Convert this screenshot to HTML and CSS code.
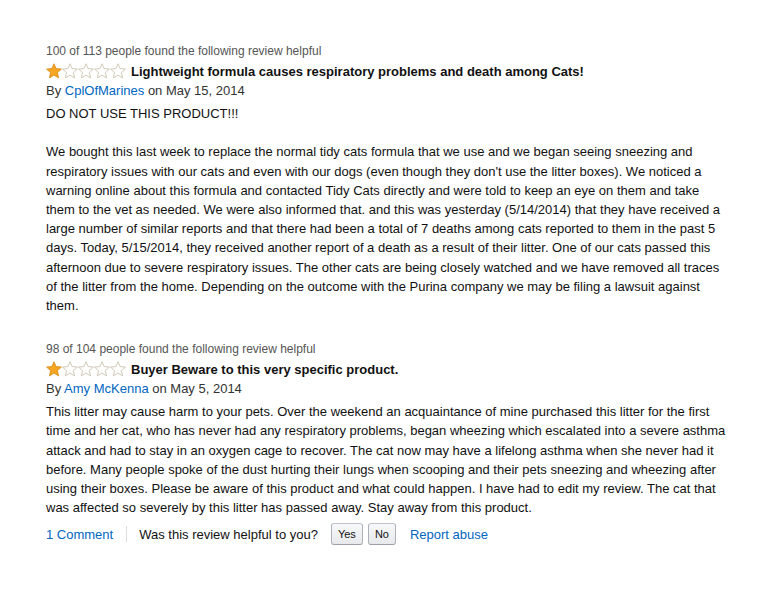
FILE: index.html
```html
<!DOCTYPE html>
<html>
<head>
<meta charset="utf-8">
<link rel="stylesheet" href="styles.css">
</head>
<body>
<div class="reviews">
  <div class="review">
    <div class="helpful">100 of 113 people found the following review helpful</div>
    <div class="title-row">
      <span class="stars">
        <svg class="star" viewBox="0 0 16 16"><path class="full" d="M8 0.8L10.1 5.6L15.4 6.1L11.4 9.6L12.6 14.9L8 12.1L3.4 14.9L4.6 9.6L0.6 6.1L5.9 5.6Z"/></svg><svg class="star" viewBox="0 0 16 16"><path class="empty" d="M8 0.8L10.1 5.6L15.4 6.1L11.4 9.6L12.6 14.9L8 12.1L3.4 14.9L4.6 9.6L0.6 6.1L5.9 5.6Z"/></svg><svg class="star" viewBox="0 0 16 16"><path class="empty" d="M8 0.8L10.1 5.6L15.4 6.1L11.4 9.6L12.6 14.9L8 12.1L3.4 14.9L4.6 9.6L0.6 6.1L5.9 5.6Z"/></svg><svg class="star" viewBox="0 0 16 16"><path class="empty" d="M8 0.8L10.1 5.6L15.4 6.1L11.4 9.6L12.6 14.9L8 12.1L3.4 14.9L4.6 9.6L0.6 6.1L5.9 5.6Z"/></svg><svg class="star" viewBox="0 0 16 16"><path class="empty" d="M8 0.8L10.1 5.6L15.4 6.1L11.4 9.6L12.6 14.9L8 12.1L3.4 14.9L4.6 9.6L0.6 6.1L5.9 5.6Z"/></svg>
      </span>
      <span class="title">Lightweight formula causes respiratory problems and death among Cats!</span>
    </div>
    <div class="byline">By <a class="link" href="#">CplOfMarines</a> on May 15, 2014</div>
    <div class="text">DO NOT USE THIS PRODUCT!!!<br><br>We bought this last week to replace the normal tidy cats formula that we use and we began seeing sneezing and<br>respiratory issues with our cats and even with our dogs (even though they don't use the litter boxes). We noticed a<br>warning online about this formula and contacted Tidy Cats directly and were told to keep an eye on them and take<br>them to the vet as needed. We were also informed that. and this was yesterday (5/14/2014) that they have received a<br>large number of similar reports and that there had been a total of 7 deaths among cats reported to them in the past 5<br>days. Today, 5/15/2014, they received another report of a death as a result of their litter. One of our cats passed this<br>afternoon due to severe respiratory issues. The other cats are being closely watched and we have removed all traces<br>of the litter from the home. Depending on the outcome with the Purina company we may be filing a lawsuit against<br>them.</div>
  </div>

  <div class="review second">
    <div class="helpful">98 of 104 people found the following review helpful</div>
    <div class="title-row">
      <span class="stars">
        <svg class="star" viewBox="0 0 16 16"><path class="full" d="M8 0.8L10.1 5.6L15.4 6.1L11.4 9.6L12.6 14.9L8 12.1L3.4 14.9L4.6 9.6L0.6 6.1L5.9 5.6Z"/></svg><svg class="star" viewBox="0 0 16 16"><path class="empty" d="M8 0.8L10.1 5.6L15.4 6.1L11.4 9.6L12.6 14.9L8 12.1L3.4 14.9L4.6 9.6L0.6 6.1L5.9 5.6Z"/></svg><svg class="star" viewBox="0 0 16 16"><path class="empty" d="M8 0.8L10.1 5.6L15.4 6.1L11.4 9.6L12.6 14.9L8 12.1L3.4 14.9L4.6 9.6L0.6 6.1L5.9 5.6Z"/></svg><svg class="star" viewBox="0 0 16 16"><path class="empty" d="M8 0.8L10.1 5.6L15.4 6.1L11.4 9.6L12.6 14.9L8 12.1L3.4 14.9L4.6 9.6L0.6 6.1L5.9 5.6Z"/></svg><svg class="star" viewBox="0 0 16 16"><path class="empty" d="M8 0.8L10.1 5.6L15.4 6.1L11.4 9.6L12.6 14.9L8 12.1L3.4 14.9L4.6 9.6L0.6 6.1L5.9 5.6Z"/></svg>
      </span>
      <span class="title">Buyer Beware to this very specific product.</span>
    </div>
    <div class="byline">By <a class="link" href="#">Amy McKenna</a> on May 5, 2014</div>
    <div class="text">This litter may cause harm to your pets. Over the weekend an acquaintance of mine purchased this litter for the first<br>time and her cat, who has never had any respiratory problems, began wheezing which escalated into a severe asthma<br>attack and had to stay in an oxygen cage to recover. The cat now may have a lifelong asthma when she never had it<br>before. Many people spoke of the dust hurting their lungs when scooping and their pets sneezing and wheezing after<br>using their boxes. Please be aware of this product and what could happen. I have had to edit my review. The cat that<br>was affected so severely by this litter has passed away. Stay away from this product.</div>
    <div class="actions">
      <a class="link comment" href="#">1 Comment</a>
      <span class="sep"></span>
      <span class="question">Was this review helpful to you?</span>
      <span class="btn">Yes</span>
      <span class="btn">No</span>
      <a class="link report" href="#">Report abuse</a>
    </div>
  </div>
</div>
</body>
</html>
```
FILE: styles.css
```css
html, body {
  margin: 0;
  padding: 0;
  background: #ffffff;
}
body {
  font-family: "Liberation Sans", Arial, Helvetica, sans-serif;
  color: #111111;
}
.reviews {
  padding: 42px 0 0 46px;
  width: 720px;
}
.review {
  display: flex;
  flex-direction: column;
}
.second {
  margin-top: 25px;
}
.helpful {
  font-size: 12px;
  line-height: 19px;
  color: #555555;
}
.title-row {
  display: flex;
  align-items: center;
  height: 20px;
}
.stars {
  display: flex;
  width: 80px;
  margin-right: 5px;
}
.star {
  width: 16px;
  height: 16px;
  display: block;
}
.full {
  fill: #f6a623;
  stroke: #d4870c;
  stroke-width: 0.8;
  stroke-linejoin: round;
}
.empty {
  fill: #ffffff;
  stroke: #c6bca6;
  stroke-width: 0.8;
  stroke-linejoin: round;
}
.title {
  font-size: 13px;
  font-weight: bold;
  color: #111111;
}
.byline {
  font-size: 13px;
  line-height: 19px;
  color: #333333;
  margin-bottom: 4px;
}
.link {
  color: #0066c0;
  text-decoration: none;
}
.text {
  font-size: 13px;
  line-height: 19.2px;
  color: #111111;
  white-space: nowrap;
}
.actions {
  display: flex;
  align-items: center;
  font-size: 13px;
  margin-top: 6px;
  height: 22px;
}
.sep {
  width: 1px;
  height: 16px;
  background: #dddddd;
  margin: 0 12px 0 13px;
}
.question {
  color: #111111;
  margin-right: 13px;
}
.btn {
  display: inline-flex;
  align-items: center;
  justify-content: center;
  height: 20px;
  padding: 0 6px;
  font-size: 11px;
  color: #111111;
  border: 1px solid #adb1b8;
  border-top-color: #c1c5cb;
  border-bottom-color: #9ca0a6;
  border-radius: 3px;
  background: linear-gradient(#f7f8fa, #e7e9ec);
  margin-right: 5px;
}
.report {
  margin-left: 9px;
}
```
